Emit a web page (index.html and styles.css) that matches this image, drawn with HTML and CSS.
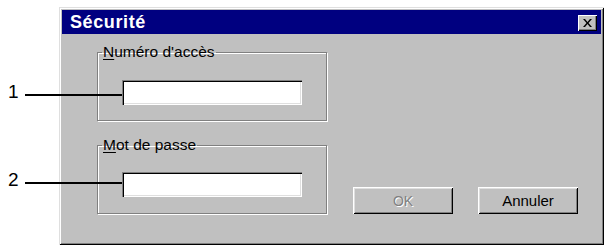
FILE: index.html
```html
<!DOCTYPE html>
<html lang="fr">
<head>
<meta charset="utf-8">
<title>Sécurité</title>
<link rel="stylesheet" href="styles.css">
</head>
<body>
<div class="dialog">
  <div class="titlebar">
    <span class="title">Sécurité</span>
    <span class="close"><svg width="9" height="8" viewBox="0 0 9 8"><path d="M0 0h2l2.5 3 2.5-3h2L5.5 4 9 8H7L4.5 5 2 8H0l3.5-4z" fill="#000"/></svg></span>
  </div>
  <div class="content">
    <div class="groups">
      <fieldset class="group group-1">
        <legend><u>N</u>uméro d'accès</legend>
        <div class="field">
          <div class="callout callout-1"><span class="num">1</span><span class="line"></span></div>
        </div>
      </fieldset>
      <fieldset class="group group-2">
        <legend><u>M</u>ot de passe</legend>
        <div class="field">
          <div class="callout callout-2"><span class="num">2</span><span class="line"></span></div>
        </div>
      </fieldset>
    </div>
    <div class="buttons">
      <div class="btn disabled">OK</div>
      <div class="btn">Annuler</div>
    </div>
  </div>
</div>
</body>
</html>
```

FILE: styles.css
```css
html, body {
  margin: 0;
  padding: 0;
  background: #fff;
}
body {
  font-family: "Liberation Sans", Arial, sans-serif;
  width: 606px;
  height: 248px;
  overflow: hidden;
}
.dialog {
  box-sizing: border-box;
  margin: 7px 0 0 59px;
  width: 545px;
  height: 238px;
  background: #c0c0c0;
  padding: 3px;
  box-shadow: inset 1px 1px 0 #dfdfdf, inset -1px -1px 0 #000,
              inset 2px 2px 0 #fff, inset -2px -2px 0 #808080;
  display: flex;
  flex-direction: column;
}
.titlebar {
  height: 24px;
  background: #000080;
  display: flex;
  align-items: center;
  justify-content: space-between;
  padding: 0 4px 0 8px;
}
.title {
  color: #fff;
  font-weight: bold;
  font-size: 18px;
  letter-spacing: 0.6px;
}
.close {
  box-sizing: border-box;
  width: 19px;
  height: 16px;
  background: #c0c0c0;
  display: flex;
  align-items: center;
  justify-content: center;
  box-shadow: inset 1px 1px 0 #fff, inset -1px -1px 0 #000, inset -2px -2px 0 #808080;
  margin-top: 2px;
}
.content {
  display: flex;
  align-items: flex-end;
  padding: 11px 0 0 35px;
}
.groups {
  display: flex;
  flex-direction: column;
  gap: 17px;
}
.group {
  box-sizing: border-box;
  width: 230px;
  height: 76px;
  margin: 0;
  padding: 0;
  border: 1px solid #808080;
  box-shadow: 1px 1px 0 #fff, inset 1px 1px 0 #fff;
  min-width: 0;
}
.group legend {
  font-size: 15.5px;
  color: #000;
  padding: 0 1px;
  margin-left: 4px;
  line-height: 14px;
}
.group legend u {
  text-decoration-thickness: 1px;
  text-underline-offset: 2px;
}
.field {
  position: relative;
  box-sizing: border-box;
  width: 180px;
  height: 25px;
  margin-left: 24px;
  background: #fff;
  box-shadow: inset 1px 1px 0 #808080, inset 2px 2px 0 #000,
              inset -1px -1px 0 #fff, inset -2px -2px 0 #dfdfdf;
}
.group-1 .field { margin-top: 21px; }
.group-2 .field { margin-top: 20px; }
.callout {
  position: absolute;
  right: 100%;
  width: 114px;
  display: flex;
  align-items: center;
  height: 2px;
}
.callout-1 { top: 14px; }
.callout-2 { top: 10px; }
.num {
  font-size: 19px;
  color: #000;
  width: 17px;
  line-height: 2px;
  position: relative;
  top: -3px;
}
.line {
  flex: 1;
  height: 2px;
  background: #000;
}
.buttons {
  display: flex;
  gap: 25px;
  margin-left: 26px;
}
.btn {
  box-sizing: border-box;
  width: 100px;
  height: 27px;
  display: flex;
  align-items: center;
  justify-content: center;
  font-size: 15px;
  color: #000;
  box-shadow: inset 1px 1px 0 #fff, inset -1px -1px 0 #000,
              inset 2px 2px 0 #dfdfdf, inset -2px -2px 0 #808080;
}
.btn.disabled {
  color: #808080;
  text-shadow: 1px 1px 0 #fff;
  font-size: 14px;
}
```
